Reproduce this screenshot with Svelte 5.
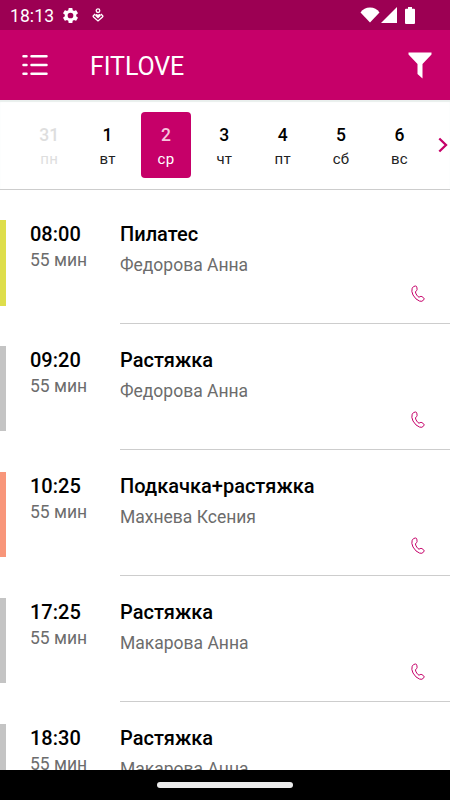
<script lang="ts">
	type Day = { date: number; name: string; past?: boolean };
	type Lesson = { time: string; title: string; coach: string; color: string };

	let selected = $state(2);

	const days: Day[] = [
		{ date: 31, name: 'пн', past: true },
		{ date: 1, name: 'вт' },
		{ date: 2, name: 'ср' },
		{ date: 3, name: 'чт' },
		{ date: 4, name: 'пт' },
		{ date: 5, name: 'сб' },
		{ date: 6, name: 'вс' }
	];

	const lessons: Lesson[] = [
		{ time: '08:00', title: 'Пилатес', coach: 'Федорова Анна', color: '#dede4b' },
		{ time: '09:20', title: 'Растяжка', coach: 'Федорова Анна', color: '#c4c4c4' },
		{ time: '10:25', title: 'Подкачка+растяжка', coach: 'Махнева Ксения', color: '#f8967a' },
		{ time: '17:25', title: 'Растяжка', coach: 'Макарова Анна', color: '#c4c4c4' },
		{ time: '18:30', title: 'Растяжка', coach: 'Макарова Анна', color: '#c4c4c4' }
	];
</script>

<div class="screen">
	<div class="status">
		<span class="clock">18:13</span>
		<svg class="gear" viewBox="0 0 24 24" width="19" height="19">
			<path fill-rule="evenodd" d="M19.14 12.94c.04-.3.06-.61.06-.94s-.02-.64-.07-.94l2.03-1.58a.49.49 0 0 0 .12-.61l-1.92-3.32a.49.49 0 0 0-.59-.22l-2.39.96a7 7 0 0 0-1.62-.94l-.36-2.54a.48.48 0 0 0-.48-.41h-3.84a.47.47 0 0 0-.47.41l-.36 2.54a7.4 7.4 0 0 0-1.62.94l-2.39-.96a.48.48 0 0 0-.59.22L2.74 8.87a.47.47 0 0 0 .12.61l2.03 1.58a6 6 0 0 0-.02 1.88l-2.03 1.58a.49.49 0 0 0-.12.61l1.92 3.32c.12.22.37.29.59.22l2.39-.96c.5.38 1.03.7 1.62.94l.36 2.54c.05.24.24.41.48.41h3.84c.24 0 .44-.17.47-.41l.36-2.54a7 7 0 0 0 1.62-.94l2.39.96c.22.08.47 0 .59-.22l1.92-3.32a.47.47 0 0 0-.12-.61zM12 15.6a3.6 3.6 0 1 1 0-7.2 3.6 3.6 0 0 1 0 7.2z" />
		</svg>
		<svg class="heart" viewBox="0 0 12 14" width="12" height="14">
			<g fill="none" stroke="currentColor" stroke-width="1.3">
				<circle cx="6" cy="2.7" r="1.8" />
				<path d="M3.1 6 1.4 7.7Q.8 8.4 1.5 9.1L6 13l4.5-3.9q.7-.7.1-1.4L8.9 6" />
			</g>
			<path d="M6 10.5 3.4 8.1C2.4 6.8 4.3 5 6 6.8 7.7 5 9.6 6.8 8.6 8.1z" />
		</svg>
		<div class="signals">
			<svg viewBox="0 0 20 16" width="20" height="16">
				<path d="M.5 5.500Q4 .6 10 .6t9.500 4.900L10 15.600z" />
			</svg>
			<svg class="cell" viewBox="0 0 16 16" width="16" height="16">
				<path d="M0 16 16 0v16z" />
			</svg>
			<svg class="battery" viewBox="0 0 10 17" width="10" height="17">
				<path d="M3 0h4v1.700h2q1 0 1 1V16q0 1-1 1H1q-1 0-1-1V2.700q0-1 1-1h2z" />
			</svg>
		</div>
	</div>

	<header class="toolbar">
		<button class="icon-btn" aria-label="Меню">
			<svg viewBox="0 0 26 22" width="26" height="22">
				<g stroke="currentColor" stroke-width="2.500" stroke-linecap="round">
					<path d="M1.500 2.300h3M9.500 2.300h15M1.500 11h3M9.500 11h15M1.500 19.700h3M9.500 19.700h15" />
				</g>
			</svg>
		</button>
		<h1>FITLOVE</h1>
		<button class="icon-btn filter" aria-label="Фильтр">
			<svg viewBox="0 0 24 27" width="24" height="27">
				<path d="M.5.5h23v2L14.500 12v14.500L9.500 22V12L.5 2.500z" />
			</svg>
		</button>
	</header>

	<nav class="week">
		{#each days as day}
			<button
				class="day"
				class:past={day.past}
				class:active={day.date === selected}
				onclick={() => (selected = day.date)}
			>
				<span class="date">{day.date}</span>
				<span class="name">{day.name}</span>
			</button>
		{/each}
		<button class="next" aria-label="Следующая неделя">
			<svg viewBox="0 0 10 16" width="10" height="16">
				<path d="M1.300 1.500 8 8l-6.700 6.500" fill="none" stroke="currentColor" stroke-width="2.300" />
			</svg>
		</button>
	</nav>

	<main class="list">
		{#each lessons as lesson}
			<article class="lesson">
				<div class="mark" style:background={lesson.color}></div>
				<div class="when">
					<div class="time">{lesson.time}</div>
					<div class="length">55 мин</div>
				</div>
				<div class="info">
					<div class="title">{lesson.title}</div>
					<div class="coach">{lesson.coach}</div>
					<svg class="phone" viewBox="0 0 14 18" width="14" height="18">
						<path d="M1.200 3.200Q2.500.8 4.600 1q1 .1 1.200 1.200l.3 2.200q.1 1-.9 1.500-1.200.7-.5 2.200.9 2.100 2.300 3.500.9.900 1.900.2 1-.8 2-.2l1.800 1.300q.9.800.1 1.900-1.700 2.300-4.200 1.300Q4.700 14.800 2 10 .1 6.200 1.200 3.200z" />
					</svg>
				</div>
			</article>
		{/each}
	</main>

	<div class="navbar"><span></span></div>
</div>

<style>
	:global(body) {
		margin: 0;
	}

	.screen {
		display: flex;
		flex-direction: column;
		width: 450px;
		height: 800px;
		overflow: hidden;
		background: #fff;
		color: #000;
		font-family: Roboto, 'Noto Sans', sans-serif;
	}

	button {
		padding: 0;
		border: none;
		background: none;
		color: inherit;
		font: inherit;
		cursor: pointer;
	}

	svg {
		display: block;
		fill: currentColor;
		flex: none;
	}

	.status {
		display: flex;
		align-items: center;
		flex: none;
		box-sizing: border-box;
		height: 30px;
		padding: 0 35px 0 10px;
		background: #9c0053;
		color: #fff;
	}

	.clock {
		width: 51px;
		font-size: 17.5px;
		line-height: 30px;
		letter-spacing: 0.1px;
		padding-top: 1px;
	}

	.heart {
		margin-left: 12px;
	}

	.signals {
		display: flex;
		align-items: center;
		margin-left: auto;
	}

	.cell {
		margin-left: 1px;
	}

	.battery {
		margin-left: 8px;
	}

	.toolbar {
		display: flex;
		align-items: center;
		flex: none;
		box-sizing: border-box;
		height: 70px;
		padding: 0 18px 0 22px;
		background: #c60069;
		color: #fff;
	}

	h1 {
		margin: 3px 0 0 42px;
		font-size: 25px;
		font-weight: 400;
		line-height: 30px;
		letter-spacing: -0.1px;
	}

	.filter {
		margin-left: auto;
	}

	.week {
		display: flex;
		align-items: center;
		flex: none;
		box-sizing: border-box;
		height: 90px;
		padding-left: 20px;
		border-bottom: 1px solid #cdcdcd;
		box-shadow: inset 0 2px 1px #e9efed;
	}

	.day {
		display: flex;
		flex-direction: column;
		align-items: center;
		flex: none;
		width: 50px;
		height: 66px;
		margin: 1px 4.2px 0;
		border-radius: 4px;
	}

	.date {
		margin-top: 12px;
		font-size: 17.5px;
		font-weight: 500;
		line-height: 22px;
	}

	.name {
		margin-top: 4px;
		font-size: 15px;
		line-height: 18px;
		letter-spacing: 0.2px;
		color: #222;
	}

	.past,
	.past .name {
		color: #dedede;
	}

	.active {
		background: #c60069;
	}

	.active .date {
		color: #f6c6de;
	}

	.active .name {
		color: #fff;
	}

	.next {
		margin-left: 9px;
		color: #c60069;
	}

	.list {
		flex: 1;
		min-height: 0;
		padding-top: 8px;
		overflow: hidden;
	}

	.lesson {
		display: flex;
		height: 125.9px;
	}

	.mark {
		width: 6px;
		height: 85.5px;
		margin-top: 22px;
	}

	.when {
		width: 90px;
		margin: 24px 0 0 24px;
	}

	.info {
		display: flex;
		flex-direction: column;
		flex: 1;
		box-sizing: border-box;
		padding: 24px 25px 0 0;
		border-bottom: 1px solid #cdcdcd;
	}

	.time,
	.title {
		font-size: 20px;
		font-weight: 500;
		line-height: 24px;
	}

	.length,
	.coach {
		color: #6c6c6c;
		font-size: 17.5px;
		line-height: 24px;
	}

	.length {
		margin-top: 2px;
	}

	.coach {
		margin-top: 7px;
	}

	.phone {
		align-self: flex-end;
		margin-top: 8px;
		fill: none;
		stroke: #c60069;
		stroke-width: 1;
	}

	.navbar {
		display: flex;
		align-items: center;
		justify-content: center;
		flex: none;
		height: 30px;
		background: #000;
	}

	.navbar span {
		width: 136px;
		height: 6px;
		border-radius: 3px;
		background: #ebebeb;
	}
</style>
